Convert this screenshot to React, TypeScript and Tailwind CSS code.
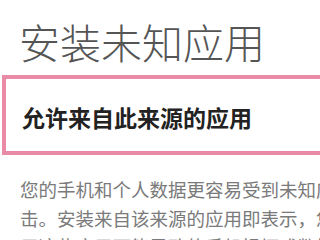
import React from "react";

export default function App() {
  const font = { fontFamily: '"Noto Sans CJK SC", "Noto Sans", sans-serif' };
  return (
    <div className="w-[320px] h-[240px] overflow-hidden bg-white" style={font}>
      <div className="w-[420px]">
        <div className="pt-[20px] pl-[19px] text-[41px] leading-[42px] font-light text-[#555555] whitespace-nowrap">
          安装未知应用
        </div>
        <div className="mt-[13px] ml-[2px] border-[4px] border-[#e98aa6] bg-white pl-[16px] pt-[27px] pb-[22px]">
          <div className="text-[23px] leading-[23px] font-bold text-[#222222] whitespace-nowrap">
            允许来自此来源的应用
          </div>
        </div>
        <div className="mt-[20px] pl-[20px] text-[18.5px] leading-[28.5px] text-[#7a7a7a] whitespace-nowrap">
          <div>您的手机和个人数据更容易受到未知应用的攻</div>
          <div>击。安装来自该来源的应用即表示，您同意对因使</div>
          <div>用这些应用可能导致的手机损坏或数据丢失承担责任。</div>
        </div>
      </div>
    </div>
  );
}
